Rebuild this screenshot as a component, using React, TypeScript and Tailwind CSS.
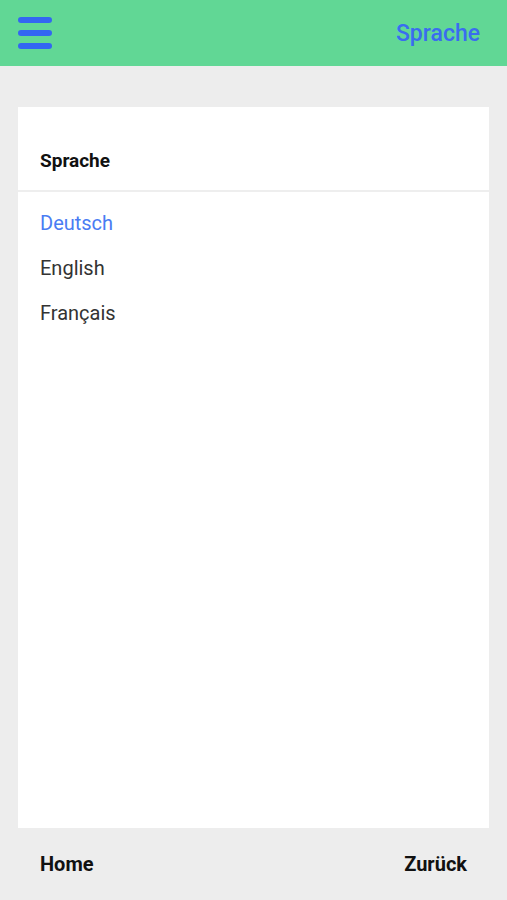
import React from 'react';

const languages = ['Deutsch', 'English', 'Français'];

export default function App() {
  const active = 'Deutsch';

  return (
    <div
      className="flex h-[900px] w-full flex-col bg-[#ededed]"
      style={{ fontFamily: 'Roboto, "Noto Sans", sans-serif' }}
    >
      <header className="flex h-[66px] shrink-0 items-center justify-between bg-[#61d795] pl-[18px] pr-[27px]">
        <button className="flex w-[34px] flex-col gap-[7px]">
          <span className="h-[6px] w-full rounded-full bg-[#3366f2]" />
          <span className="h-[6px] w-full rounded-full bg-[#3366f2]" />
          <span className="h-[6px] w-full rounded-full bg-[#3366f2]" />
        </button>
        <span className="text-[23px] font-medium leading-none text-[#3a6cf0]">Sprache</span>
      </header>

      <main className="flex flex-1 flex-col px-[18px] pt-[41px]">
        <div className="flex flex-1 flex-col bg-white">
          <div className="border-b-2 border-[#eeeeee] px-[22px] pb-[17px] pt-[42px]">
            <h2 className="text-[19px] font-bold leading-[24px] text-[#111111]">Sprache</h2>
          </div>
          <ul className="px-[22px] pt-[8px]">
            {languages.map((lang) => (
              <li
                key={lang}
                className={
                  'flex h-[45px] items-center text-[20px] ' +
                  (lang === active ? 'text-[#4a7cf3]' : 'text-[#333333]')
                }
              >
                {lang}
              </li>
            ))}
          </ul>
        </div>
      </main>

      <footer className="flex h-[72px] shrink-0 items-center justify-between px-[40px]">
        <span className="text-[20px] font-bold text-[#111111]">Home</span>
        <span className="text-[20px] font-bold text-[#111111]">Zurück</span>
      </footer>
    </div>
  );
}
